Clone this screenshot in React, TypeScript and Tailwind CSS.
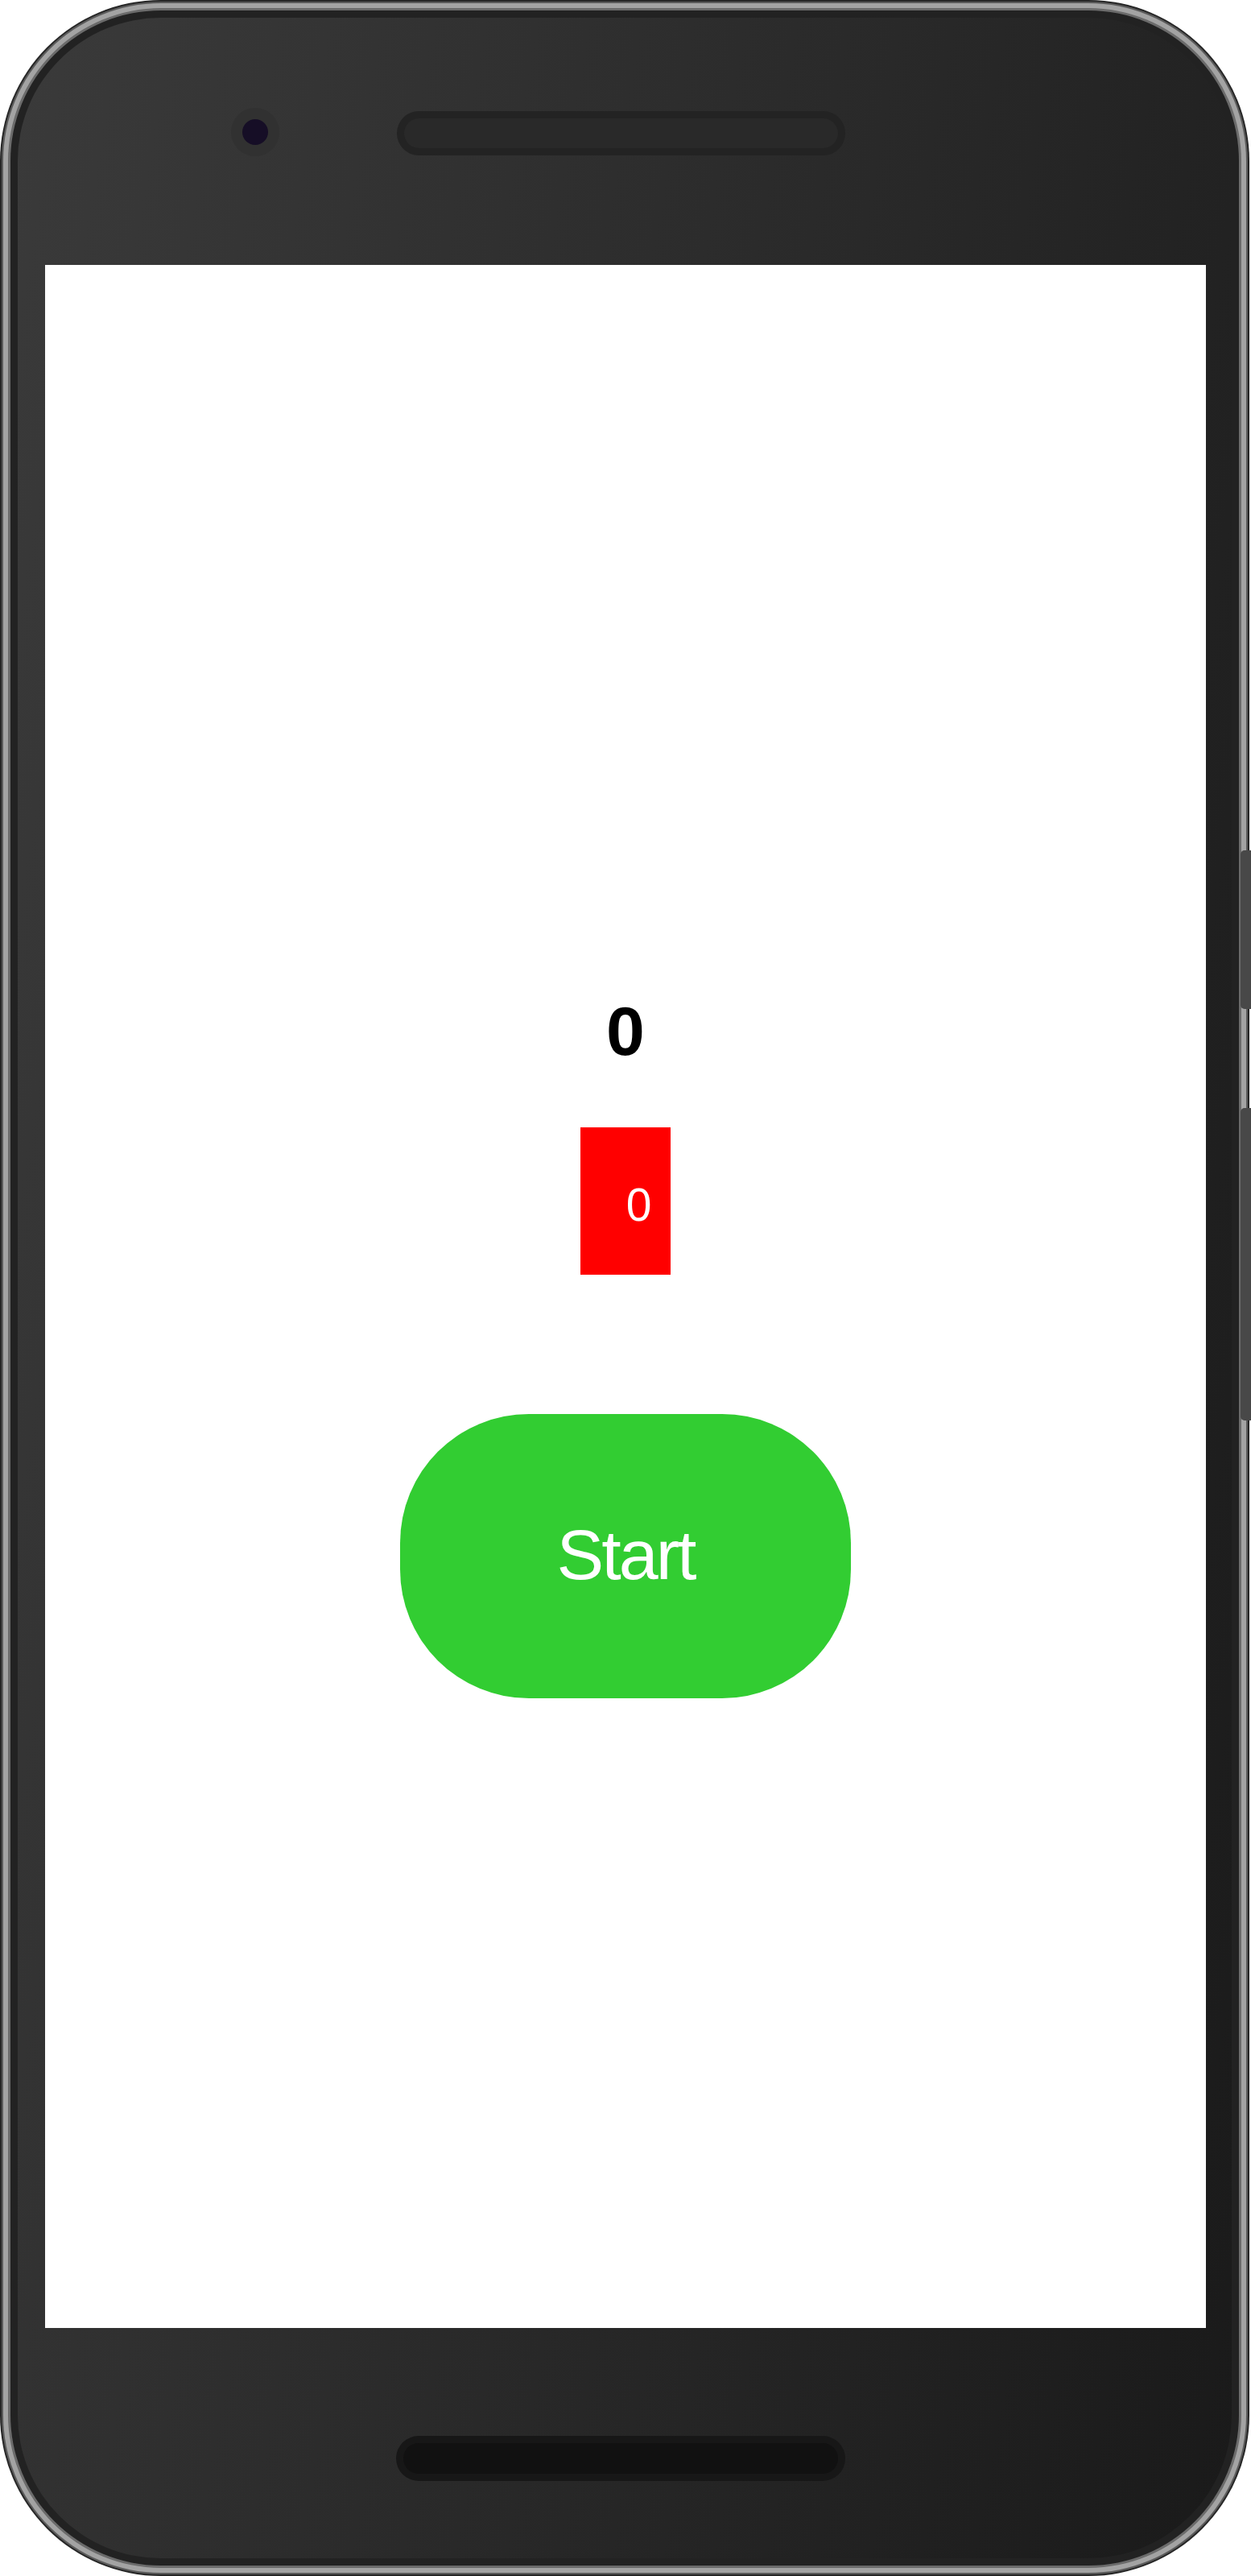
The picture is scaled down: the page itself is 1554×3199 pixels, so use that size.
import React from "react";

export default function App() {
  return (
    <div className="relative w-[1554px] h-[3199px] bg-white" style={{ fontFamily: '"Liberation Sans", Arial, sans-serif' }}>
      <div className="w-[1552px] h-[3199px] rounded-[200px] bg-[#262626] p-[2px]">
        <div className="w-full h-full rounded-[198px] bg-[#5a5a5a] p-[2px]">
          <div className="w-full h-full rounded-[196px] bg-[#a3a3a3] p-[6px]">
            <div className="w-full h-full rounded-[190px] bg-[#6b6b6b] p-[3px]">
              <div className="w-full h-full rounded-[187px] bg-[#222222] p-[9px]">
                <div className="w-full h-full rounded-[178px] bg-[linear-gradient(100deg,#3a3a3a,#1a1a1a)] flex flex-col">
                  {/* top bezel */}
                  <div className="h-[307px] flex flex-row items-start pt-[112px] pl-[265px]">
                    <div className="w-[60px] h-[60px] rounded-full bg-[#313131] flex items-center justify-center">
                      <div className="w-[32px] h-[32px] rounded-full bg-[#160e26]" />
                    </div>
                    <div className="ml-[146px] mt-[4px] w-[557px] h-[55px] rounded-full bg-[#232323] p-[9px]">
                      <div className="w-full h-full rounded-full bg-[#292929]" />
                    </div>
                  </div>
                  {/* screen */}
                  <div className="ml-[34px] w-[1442px] h-[2562px] bg-white flex flex-col items-center">
                    <div className="mt-[908px] h-[86px] text-[86px] leading-none font-bold text-black">0</div>
                    <div className="mt-[77px] w-[112px] h-[183px] bg-[#ff0000] flex items-center justify-center pl-[33px] pt-[9px] text-white text-[57px] leading-none">
                      0
                    </div>
                    <button className="mt-[173px] w-[560px] h-[353px] rounded-[160px] bg-[#32cd32] text-white text-[88px] tracking-[-3px] leading-none flex items-center justify-center pb-[4px]">
                      Start
                    </button>
                  </div>
                  {/* bottom bezel */}
                  <div className="flex-1 flex flex-row items-start pt-[134px] pl-[470px]">
                    <div className="w-[558px] h-[56px] rounded-full bg-[#171717] p-[9px]">
                      <div className="w-full h-full rounded-full bg-[#111111]" />
                    </div>
                  </div>
                </div>
              </div>
            </div>
          </div>
        </div>
      </div>
      {/* side buttons */}
      <div className="absolute left-[1541px] top-[1056px] w-[13px] h-[197px] rounded-l-[5px] bg-[#484848]" />
      <div className="absolute left-[1541px] top-[1376px] w-[13px] h-[388px] rounded-l-[5px] bg-[#484848]" />
    </div>
  );
}
